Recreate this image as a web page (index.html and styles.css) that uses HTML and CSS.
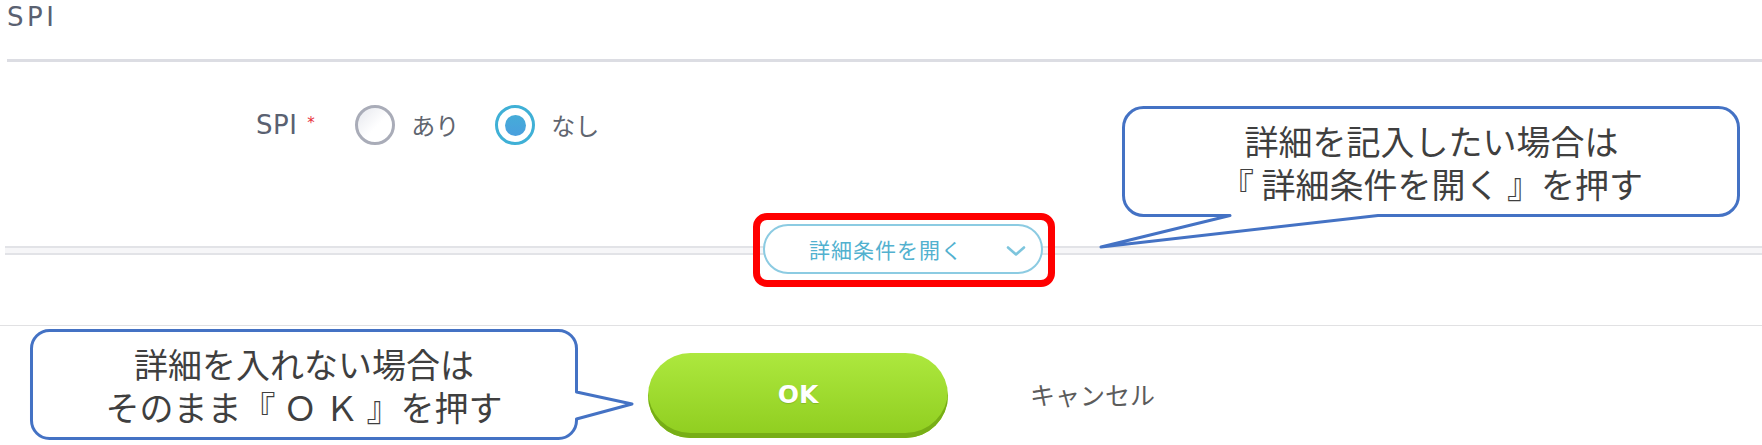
FILE: index.html
```html
<!DOCTYPE html>
<html lang="ja">

<head>
  <meta charset="UTF-8">
  <title>SPI</title>
  <link rel="stylesheet" href="styles.css">
</head>

<body>
  <h2 class="section-title">SPI</h2>

  <div class="form-row">
    <span class="field-label">SPI<span class="req">*</span></span>
    <label class="radio"><span class="radio-mark"></span>あり</label>
    <label class="radio checked"><span class="radio-mark"></span>なし</label>
  </div>

  <div class="toggle-row">
    <button class="toggle">
      <span>詳細条件を開く</span>
      <svg viewBox="0 0 20 10" fill="none" stroke="currentColor" stroke-width="2.6" stroke-linecap="round"
        stroke-linejoin="round">
        <path d="M2 1.5 10 8.5 18 1.5" /></svg>
    </button>
  </div>

  <div class="footer">
    <button class="ok">OK</button>
    <span class="cancel">キャンセル</span>
  </div>

  <!-- annotations -->
  <div class="note note-detail">
    <svg class="note-shape" viewBox="0 0 645 146">
      <path d="M45.5 3.5H620.5A20 20 0 0 1 640.5 23.5V91.5A20 20 0 0 1 620.5 111.5H280L3 143 132 111.5H45.5A20 20 0 0 1 25.5 91.5V23.5A20 20 0 0 1 45.5 3.5Z" />
    </svg>
    <p><span>詳細を記入したい場合は</span><span>『 詳細条件を開く 』を押す</span></p>
  </div>

  <div class="note note-ok">
    <svg class="note-shape" viewBox="0 0 608 116">
      <path d="M21.5 3.5H530.5A18 18 0 0 1 548.5 21.5V65L604 77 548.5 92V93.5A18 18 0 0 1 530.5 111.5H21.5A18 18 0 0 1 3.5 93.5V21.5A18 18 0 0 1 21.5 3.5Z" />
    </svg>
    <p><span>詳細を入れない場合は</span><span>そのまま『 Ｏ Ｋ 』を押す</span></p>
  </div>

  <div class="highlight"></div>
</body>

</html>
```

FILE: styles.css
```css
* {
  box-sizing: border-box
}

:root {
  --rule: #dcdde3;
  --label: #5a6171;
  --cyan: #52b1cf;
  --note: #4472c4
}

body {
  margin: 0;
  width: 1762px;
  height: 445px;
  overflow: hidden;
  position: relative;
  background: #fff;
  font-family: "Noto Sans CJK JP", sans-serif;
  color: var(--label)
}

.section-title {
  margin: 0 0 0 7px;
  padding: 2px 0 27px;
  font: 400 26px/30px "DejaVu Sans", sans-serif;
  letter-spacing: 3.5px;
  color: var(--label);
  border-bottom: 3px solid var(--rule)
}

.form-row {
  display: flex;
  align-items: center;
  padding: 43px 0 79px 256px;
  box-sizing: content-box;
  height: 40px
}

.field-label {
  display: flex;
  align-items: center;
  font: 400 26px/30px "DejaVu Sans", sans-serif;
  letter-spacing: .5px
}

.req {
  color: #e8313a;
  font-size: 15px;
  margin: 0 0 4px 10px
}

.radio {
  display: flex;
  align-items: center;
  gap: 16px;
  font-size: 24px;
  line-height: 40px;
  color: #60656f;
  margin-left: 40px
}

.radio+.radio {
  margin-left: 36px
}

.radio-mark {
  width: 40px;
  height: 40px;
  border-radius: 50%;
  border: 3px solid #a9acb8;
  background: linear-gradient(135deg, #e6e8ee 0%, #fff 55%);
  display: flex;
  align-items: center;
  justify-content: center
}

.radio.checked .radio-mark {
  border-color: #3fb0d6;
  background: #fff
}

.radio.checked .radio-mark::after {
  content: "";
  width: 21px;
  height: 21px;
  border-radius: 50%;
  background: linear-gradient(#45acd8, #4a9fde)
}

.toggle-row {
  position: relative;
  height: 50px;
  margin-bottom: 51px;
  padding-left: 763px
}

.toggle-row::before {
  content: "";
  position: absolute;
  left: 5px;
  right: 0;
  top: 22px;
  height: 5px;
  border-top: 2px solid #e2e3e7;
  border-bottom: 2px solid #e2e3e7;
  background: #f6f6f8
}

.toggle {
  position: relative;
  width: 280px;
  height: 50px;
  display: flex;
  align-items: center;
  justify-content: space-between;
  padding: 0 15px 0 44px;
  background: #fff;
  border: 2px solid #8ccbe2;
  border-radius: 25px;
  font-family: inherit;
  font-size: 21px;
  letter-spacing: 1px;
  color: var(--cyan);
  cursor: pointer
}

.toggle svg {
  width: 20px;
  height: 10px;
  color: #7dc5dd;
  margin-top: 4px
}

.footer {
  display: flex;
  align-items: center;
  border-top: 1px solid #e1e1e3;
  padding: 27px 0 0 648px
}

.ok {
  width: 300px;
  height: 85px;
  border: none;
  border-radius: 43px;
  background: linear-gradient(#ade83e, #8fcd1f);
  box-shadow: inset 0 -5px 0 #77ae16;
  color: #fff;
  font: 700 25px/1 "DejaVu Sans", sans-serif;
  text-shadow: 0 1px 1px rgba(0, 0, 0, .15);
  padding-bottom: 4px;
  cursor: pointer
}

.cancel {
  margin-left: 82px;
  font-size: 25px;
  color: #5c5c5c;
  padding-bottom: 4px
}

.note {
  position: absolute;
  display: flex;
  align-items: center;
  justify-content: center
}

.note-shape {
  position: absolute;
  left: 0;
  top: 0;
  width: 100%;
  height: 100%;
  overflow: visible
}

.note-shape path {
  fill: #fff;
  stroke: var(--note);
  stroke-width: 3;
  stroke-linejoin: round
}

.note p {
  position: relative;
  margin: 0;
  display: flex;
  flex-direction: column;
  align-items: center;
  font-size: 34px;
  line-height: 43px;
  color: #3f3f3f
}

.note-detail {
  left: 1098px;
  top: 104px;
  width: 645px;
  height: 146px;
  padding: 2px 2px 33px 24px
}

.note-ok {
  left: 28px;
  top: 327px;
  width: 608px;
  height: 116px;
  padding: 2px 58px 3px 2px
}

.highlight {
  position: absolute;
  left: 753px;
  top: 213px;
  width: 302px;
  height: 74px;
  border: 7px solid #ff0000;
  border-radius: 14px
}
```
